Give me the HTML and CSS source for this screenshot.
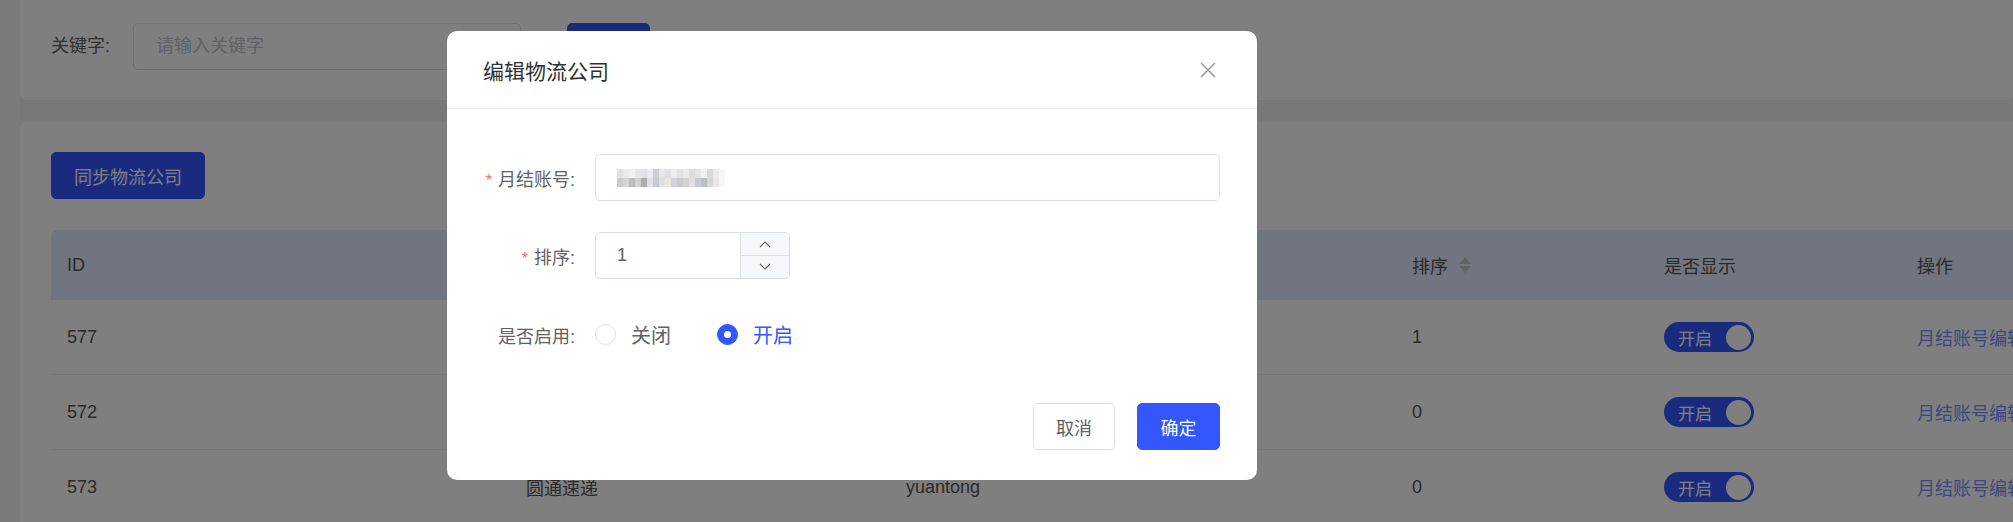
FILE: index.html
```html
<!DOCTYPE html>
<html>
<head>
    <meta charset="utf-8">
    <link rel="stylesheet" href="styles.css">
</head>
<body>
    <div class="page">
        <div class="side"></div>
        <div class="main">
            <div class="card search-card">
                <label class="search-label">关键字:</label>
                <div class="input search-input">请输入关键字</div>
                <button class="btn btn-primary search-btn"></button>
            </div>

            <div class="card list-card">
                <button class="btn btn-primary sync-btn">同步物流公司</button>

                <div class="table">
                    <div class="tr th">
                        <div class="cell">ID</div>
                        <div class="cell"></div>
                        <div class="cell"></div>
                        <div class="cell">排序
                            <svg class="sort-icon" width="14" height="18" viewBox="0 0 14 18">
                                <path d="M1 8 L7 1 L13 8 Z" fill="#c0c4cc"/>
                                <path d="M1 10 L7 17 L13 10 Z" fill="#c0c4cc"/>
                            </svg>
                        </div>
                        <div class="cell">是否显示</div>
                        <div class="cell">操作</div>
                    </div>
                    <div class="tr">
                        <div class="cell">577</div>
                        <div class="cell"></div>
                        <div class="cell"></div>
                        <div class="cell">1</div>
                        <div class="cell"><span class="switch"><span>开启</span><i class="knob"></i></span></div>
                        <div class="cell"><a class="link">月结账号编辑</a></div>
                    </div>
                    <div class="tr">
                        <div class="cell">572</div>
                        <div class="cell"></div>
                        <div class="cell"></div>
                        <div class="cell">0</div>
                        <div class="cell"><span class="switch"><span>开启</span><i class="knob"></i></span></div>
                        <div class="cell"><a class="link">月结账号编辑</a></div>
                    </div>
                    <div class="tr">
                        <div class="cell">573</div>
                        <div class="cell">圆通速递</div>
                        <div class="cell">yuantong</div>
                        <div class="cell">0</div>
                        <div class="cell"><span class="switch"><span>开启</span><i class="knob"></i></span></div>
                        <div class="cell"><a class="link">月结账号编辑</a></div>
                    </div>
                </div>
            </div>
        </div>
    </div>

    <div class="mask">
        <div class="dialog">
            <div class="dialog-header">
                <span class="dialog-title">编辑物流公司</span>
                <svg class="dialog-close" width="16" height="16" viewBox="0 0 16 16">
                    <path d="M1 1 L15 15 M15 1 L1 15" stroke="#909399" stroke-width="1.4" fill="none"/>
                </svg>
            </div>

            <div class="dialog-body">
                <div class="form-item">
                    <label class="form-label"><span class="required">*</span>月结账号:</label>
                    <div class="input form-input">
                        <div class="mosaic">
                            <div class="mosaic-row row-a"></div>
                            <div class="mosaic-row row-b"></div>
                        </div>
                    </div>
                </div>
                <div class="form-item">
                    <label class="form-label"><span class="required">*</span>排序:</label>
                    <div class="input number-input">
                        <span class="number-value">1</span>
                        <div class="number-ctrl">
                            <span class="ctrl-btn">
                                <svg width="12" height="8" viewBox="0 0 12 8"><path d="M1 7 L6 2 L11 7" stroke="#606266" stroke-width="1.1" fill="none"/></svg>
                            </span>
                            <span class="ctrl-btn">
                                <svg width="12" height="8" viewBox="0 0 12 8"><path d="M1 1 L6 6 L11 1" stroke="#606266" stroke-width="1.1" fill="none"/></svg>
                            </span>
                        </div>
                    </div>
                </div>
                <div class="form-item radio-item">
                    <label class="form-label">是否启用:</label>
                    <span class="radio"><i class="radio-dot"></i>关闭</span>
                    <span class="radio is-checked"><i class="radio-dot"></i>开启</span>
                </div>
            </div>

            <div class="dialog-footer">
                <button class="btn btn-default">取消</button>
                <button class="btn btn-primary">确定</button>
            </div>
        </div>
    </div>
</body>
</html>
```

FILE: styles.css
```css
body {
    margin: 0;
    width: 2013px;
    height: 522px;
    overflow: hidden;
    font-family: "Liberation Sans", "Noto Sans CJK SC", sans-serif;
    font-size: 18px;
    color: #606266;
}
.page {
    display: flex;
    height: 522px;
    background: #eef0f4;
}
.side {
    width: 20px;
    flex-shrink: 0;
    background: #f6f7fa;
}
.main {
    flex: 1;
    overflow: hidden;
}
.card {
    background: #fff;
}

/* search */
.search-card {
    height: 100px;
    box-sizing: border-box;
    padding: 23px 31px 0;
    display: flex;
    align-items: flex-start;
    border-radius: 0 0 6px 6px;
    margin-bottom: 22px;
}
.search-label {
    width: 82px;
    line-height: 47px;
}
.search-input {
    width: 388px;
    padding-left: 22px;
    line-height: 45px;
    color: #c0c4cc;
}
.search-btn {
    width: 83px;
    margin-left: 46px;
}

/* buttons */
.btn {
    height: 47px;
    padding: 0;
    border: 1px solid #dcdfe6;
    border-radius: 5px;
    font-family: inherit;
    font-size: 18px;
    cursor: pointer;
}
.btn-primary {
    background: #3456ff;
    border-color: #3456ff;
    color: #fff;
}
.btn-default {
    background: #fff;
    color: #606266;
}

/* list */
.list-card {
    height: 400px;
    padding: 30px 0 0 31px;
    border-radius: 6px 0 0 0;
}
.sync-btn {
    width: 154px;
    display: block;
}
.table {
    margin-top: 31px;
    width: 2200px;
}
.tr {
    display: grid;
    grid-template-columns: 459px 380px 506px 252px 253px 350px;
    height: 75px;
    box-sizing: border-box;
    border-bottom: 1px solid #ebeef5;
    color: #555;
}
.th {
    height: 70px;
    background: #e2eaff;
    border-bottom: none;
    border-radius: 6px 0 0 0;
}
.cell {
    display: flex;
    align-items: center;
    padding-left: 16px;
}
.sort-icon {
    margin-left: 10px;
}
.switch {
    width: 90px;
    height: 30px;
    box-sizing: border-box;
    padding: 0 3px 0 14px;
    border-radius: 15px;
    background: #3456ff;
    color: #fff;
    font-size: 17px;
    display: flex;
    align-items: center;
    justify-content: space-between;
}
.knob {
    width: 25px;
    height: 25px;
    border-radius: 50%;
    background: #fff;
}
.link {
    color: #7b8fff;
    white-space: nowrap;
}

/* dialog */
.mask {
    position: fixed;
    top: 0;
    left: 0;
    right: 0;
    bottom: 0;
    background: rgba(0, 0, 0, 0.5);
}
.dialog {
    position: absolute;
    left: 447px;
    top: 31px;
    width: 810px;
    background: #fff;
    border-radius: 10px;
}
.dialog-header {
    height: 77px;
    padding: 0 41px 0 36px;
    display: flex;
    align-items: center;
    justify-content: space-between;
    border-bottom: 1px solid #e8eaef;
}
.dialog-title {
    font-size: 21px;
    color: #303133;
}
.dialog-body {
    padding: 45px 37px 0 36px;
}
.form-item {
    display: flex;
    align-items: center;
    height: 47px;
}
.form-item + .form-item {
    margin-top: 31px;
}
.form-item.radio-item {
    margin-top: 32px;
}
.form-label {
    width: 112px;
    padding-right: 20px;
    box-sizing: border-box;
    text-align: right;
    white-space: nowrap;
}
.required {
    color: #f56c6c;
    margin-right: 6px;
    font-size: 16px;
}
.input {
    height: 47px;
    box-sizing: border-box;
    border: 1px solid #dcdfe6;
    border-radius: 5px;
    background: #fff;
}
.form-input {
    flex: 1;
    display: flex;
    align-items: center;
    padding-left: 21px;
}
.mosaic {
    width: 108px;
}
.mosaic-row {
    height: 9px;
}
.row-a {
    background: linear-gradient(to right,
        #e2e2e4 0 6px, #e9ebee 6px 12px, #f0f0ec 12px 18px, #e6e6e6 18px 24px,
        #dfe2e8 24px 30px, #eaeaea 30px 36px, #cfcfcf 36px 42px, #e6e6e6 42px 48px,
        #dcdfe6 48px 54px, #ececec 54px 60px, #e0e2e8 60px 66px, #eaeaea 66px 72px,
        #dcdcdc 72px 78px, #e4e4e4 78px 84px, #eef0f4 84px 90px, #dadada 90px 96px,
        #eaeaea 96px 102px, #f4f6fa 102px 108px);
}
.row-b {
    background: linear-gradient(to right,
        #cbcbcd 0 6px, #d4d4d4 6px 12px, #bdbdbd 12px 18px, #d2d2d2 18px 24px,
        #b2aaaa 24px 30px, #dde0e4 30px 36px, #cacaca 36px 42px, #dedfe2 42px 48px,
        #eae6e2 48px 54px, #d2d2da 54px 60px, #cacaca 60px 66px, #d4d0cc 66px 72px,
        #e0e0e6 72px 78px, #cacace 78px 84px, #bcc0c4 84px 90px, #d6d6d6 90px 96px,
        #e8e8e8 96px 102px, #f4f6fa 102px 108px);
}
.number-input {
    width: 195px;
    display: flex;
}
.number-value {
    flex: 1;
    padding-left: 21px;
    line-height: 45px;
}
.number-ctrl {
    width: 48px;
    display: flex;
    flex-direction: column;
    border-left: 1px solid #dcdfe6;
    border-radius: 0 5px 5px 0;
    background: #f5f7fa;
}
.ctrl-btn {
    flex: 1;
    display: flex;
    align-items: center;
    justify-content: center;
}
.ctrl-btn + .ctrl-btn {
    border-top: 1px solid #dcdfe6;
}
.radio {
    display: flex;
    align-items: center;
    margin-right: 46px;
    font-size: 20px;
    color: #606266;
}
.radio-dot {
    width: 21px;
    height: 21px;
    box-sizing: border-box;
    border: 1px solid #dcdfe6;
    border-radius: 50%;
    margin-right: 15px;
    display: flex;
    align-items: center;
    justify-content: center;
}
.radio.is-checked {
    color: #3456ff;
}
.radio.is-checked .radio-dot {
    background: #3456ff;
    border-color: #3456ff;
}
.radio.is-checked .radio-dot::after {
    content: "";
    width: 7px;
    height: 7px;
    border-radius: 50%;
    background: #fff;
}
.dialog-footer {
    padding: 45px 37px 30px;
    display: flex;
    justify-content: flex-end;
    gap: 22px;
}
.dialog-footer .btn-default {
    width: 82px;
}
.dialog-footer .btn-primary {
    width: 83px;
}
```
